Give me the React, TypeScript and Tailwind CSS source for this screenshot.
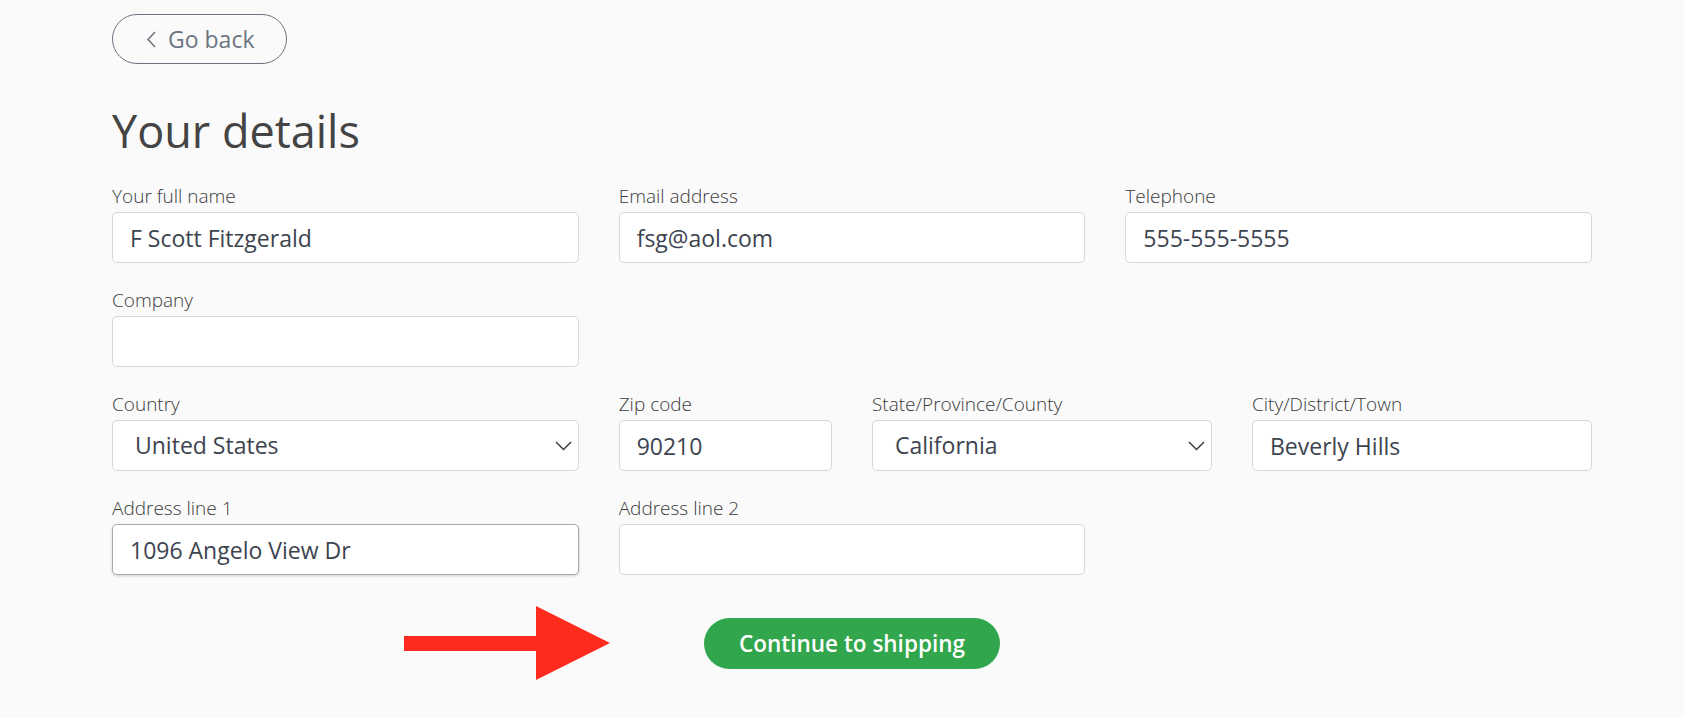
import React from "react";

const font = { fontFamily: '"Open Sans", "Liberation Sans", sans-serif' };

function Chevron() {
  return (
    <svg width="17" height="10" viewBox="0 0 17 10" className="pointer-events-none absolute right-[7px] top-1/2 -translate-y-1/2">
      <polyline points="1,1 8.5,8.5 16,1" fill="none" stroke="#3a3f47" strokeWidth="1.5" />
    </svg>
  );
}

function Field({
  label,
  value = "",
  span,
  focused = false,
}: {
  label: string;
  value?: string;
  span: string;
  focused?: boolean;
}) {
  return (
    <div className={span}>
      <label className="block text-[19px] leading-[24px] font-light text-[#3a3a3a] mb-[4px]">{label}</label>
      <input
        defaultValue={value}
        className={
          "block w-full h-[51px] rounded-[5px] bg-white pl-[17px] text-[23px] text-[#3d4450] outline-none border " +
          (focused ? "border-[#a3abb4] shadow-[0_1px_3px_rgba(0,0,0,0.18)]" : "border-[#d3d8de]")
        }
        style={font}
      />
    </div>
  );
}

function SelectField({ label, value, span }: { label: string; value: string; span: string }) {
  return (
    <div className={span}>
      <label className="block text-[19px] leading-[24px] font-light text-[#3a3a3a] mb-[4px]">{label}</label>
      <div className="relative">
        <select
          defaultValue={value}
          className="block w-full h-[51px] appearance-none rounded-[5px] border border-[#d3d8de] bg-white pl-[22px] text-[23px] text-[#3d4450] outline-none"
          style={font}
        >
          <option>{value}</option>
        </select>
        <Chevron />
      </div>
    </div>
  );
}

export default function App() {
  return (
    <div className="min-h-screen bg-[#fafafa] pl-[112px] pt-[14px]" style={font}>
      <div className="w-[1480px]">
        <button className="flex h-[50px] w-[175px] items-center rounded-full border border-[#6b7380] pl-[33px] text-[23px] text-[#6b7480]">
          <svg width="11" height="17" viewBox="0 0 11 17" className="mr-[11px]">
            <polyline points="9,1 2,8.5 9,16" fill="none" stroke="#6b7480" strokeWidth="1.5" />
          </svg>
          Go back
        </button>

        <h1 className="mt-[44px] text-[45px] leading-none text-[#444444]">Your details</h1>

        <div className="mt-[31px] grid grid-cols-12 gap-x-[40px] gap-y-[25px]">
          <Field label="Your full name" value="F Scott Fitzgerald" span="col-span-4" />
          <Field label="Email address" value="fsg@aol.com" span="col-span-4" />
          <Field label="Telephone" value="555-555-5555" span="col-span-4" />

          <Field label="Company" span="col-span-4" />
          <div className="col-span-8" />

          <SelectField label="Country" value="United States" span="col-span-4" />
          <Field label="Zip code" value="90210" span="col-span-2" />
          <SelectField label="State/Province/County" value="California" span="col-span-3" />
          <Field label="City/District/Town" value="Beverly Hills" span="col-span-3" />

          <Field label="Address line 1" value="1096 Angelo View Dr" span="col-span-4" focused />
          <Field label="Address line 2" span="col-span-4" />
        </div>

        <div className="mt-[43px] flex justify-center">
          <div className="relative">
            <svg width="206" height="74" viewBox="0 0 206 74" className="absolute left-[-300px] top-[-12px]">
              <rect x="0" y="30" width="133" height="15" fill="#ff2b1f" />
              <polygon points="132,0 206,37 132,74" fill="#ff2b1f" />
            </svg>
            <button className="h-[51px] w-[296px] rounded-full bg-[#32a64d] text-[22.5px] font-semibold text-white">
              Continue to shipping
            </button>
          </div>
        </div>
      </div>
    </div>
  );
}
